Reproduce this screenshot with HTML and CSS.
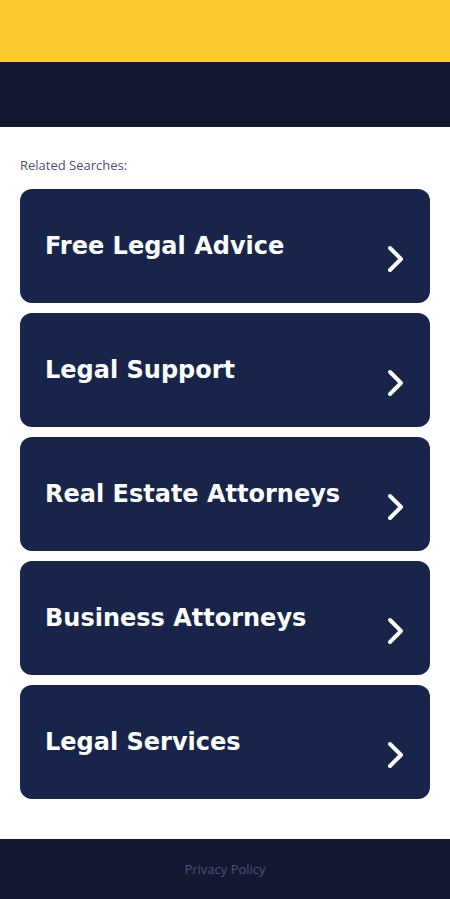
FILE: index.html
```html
<!DOCTYPE html>
<html lang="en">
<head>
<meta charset="utf-8">
<title>Related Searches</title>
<link rel="stylesheet" href="styles.css">
</head>
<body>
<div class="top-bar"></div>
<div class="header"></div>
<main class="content">
  <div class="label">Related Searches:</div>
  <div class="list">
    <a class="card" href="#"><span class="title">Free Legal Advice</span><svg class="chev" width="20" height="28" viewBox="0 0 20 28"><polyline points="4,3 15,14 4,25" fill="none" stroke="#fff" stroke-width="4" stroke-linecap="round" stroke-linejoin="round"/></svg></a>
    <a class="card" href="#"><span class="title">Legal Support</span><svg class="chev" width="20" height="28" viewBox="0 0 20 28"><polyline points="4,3 15,14 4,25" fill="none" stroke="#fff" stroke-width="4" stroke-linecap="round" stroke-linejoin="round"/></svg></a>
    <a class="card" href="#"><span class="title">Real Estate Attorneys</span><svg class="chev" width="20" height="28" viewBox="0 0 20 28"><polyline points="4,3 15,14 4,25" fill="none" stroke="#fff" stroke-width="4" stroke-linecap="round" stroke-linejoin="round"/></svg></a>
    <a class="card" href="#"><span class="title">Business Attorneys</span><svg class="chev" width="20" height="28" viewBox="0 0 20 28"><polyline points="4,3 15,14 4,25" fill="none" stroke="#fff" stroke-width="4" stroke-linecap="round" stroke-linejoin="round"/></svg></a>
    <a class="card" href="#"><span class="title">Legal Services</span><svg class="chev" width="20" height="28" viewBox="0 0 20 28"><polyline points="4,3 15,14 4,25" fill="none" stroke="#fff" stroke-width="4" stroke-linecap="round" stroke-linejoin="round"/></svg></a>
  </div>
</main>
<footer class="footer"><a href="#" class="privacy">Privacy Policy</a></footer>
</body>
</html>
```
FILE: styles.css
```css
html, body {
  margin: 0;
  padding: 0;
  background: #ffffff;
}
body {
  font-family: "DejaVu Sans", sans-serif;
}
.top-bar {
  height: 62px;
  background: #ffc933;
}
.header {
  height: 65px;
  background: #131830;
}
.content {
  padding: 30px 20px 40px;
}
.label {
  font-family: "Open Sans", "DejaVu Sans", sans-serif;
  font-size: 13px;
  line-height: 16px;
  color: #4a5270;
  font-weight: 500;
  margin-bottom: 16px;
}
.list {
  display: flex;
  flex-direction: column;
  gap: 10px;
}
.card {
  display: flex;
  align-items: center;
  justify-content: space-between;
  height: 114px;
  box-sizing: border-box;
  padding: 0 24px 0 25px;
  background: #19244b;
  border-radius: 12px;
  text-decoration: none;
}
.title {
  color: #ffffff;
  font-weight: bold;
  font-size: 24px;
  line-height: 30px;
}
.chev {
  display: block;
  margin-top: 26px;
}
.footer {
  height: 60px;
  background: #131830;
  display: flex;
  align-items: center;
  justify-content: center;
}
.privacy {
  font-family: "Open Sans", "DejaVu Sans", sans-serif;
  font-size: 13px;
  color: #4b5373;
  text-decoration: none;
}
```
